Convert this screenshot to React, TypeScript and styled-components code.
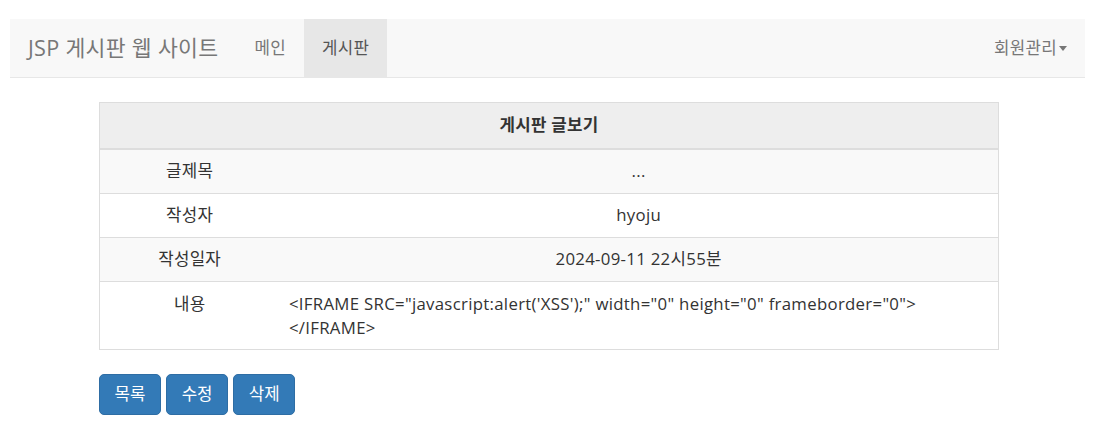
import styled, { createGlobalStyle } from "styled-components";

const GlobalStyle = createGlobalStyle`
  html, body {
    margin: 0;
    padding: 0;
    background: #ffffff;
  }
  body {
    font-family: "Open Sans", "Noto Sans CJK KR", sans-serif;
    font-size: 16.8px;
    line-height: 24px;
    letter-spacing: 0.3px;
    color: #333333;
  }
  * {
    box-sizing: border-box;
  }
`;

const Page = styled.div`
  width: 1104px;
  padding-top: 19px;
`;

const Navbar = styled.nav`
  display: flex;
  align-items: stretch;
  height: 59px;
  margin: 0 19px 24px 10px;
  background-color: #f8f8f8;
  border-bottom: 1px solid #e7e7e7;
`;

const Brand = styled.a`
  display: flex;
  align-items: center;
  padding: 0 18px;
  font-size: 21.6px;
  color: #777777;
  text-decoration: none;
`;

const Nav = styled.ul`
  display: flex;
  margin: 0;
  padding: 0;
  list-style: none;
`;

const NavRight = styled(Nav)`
  margin-left: auto;
`;

const NavItem = styled.li<{ $active?: boolean }>`
  display: flex;
  align-items: center;
  padding: 0 18px;
  color: ${(p) => (p.$active ? "#555555" : "#777777")};
  background-color: ${(p) => (p.$active ? "#e7e7e7" : "transparent")};
`;

const Caret = styled.span`
  display: inline-block;
  width: 0;
  height: 0;
  margin-left: 2px;
  border-top: 5px solid #777777;
  border-left: 4.5px solid transparent;
  border-right: 4.5px solid transparent;
  vertical-align: middle;
`;

const Container = styled.div`
  width: 900px;
  margin-left: 99px;
`;

const Table = styled.table`
  width: 100%;
  border-collapse: collapse;
  border-spacing: 0;
  border: 1px solid #dddddd;
  text-align: center;
  margin-bottom: 24px;
`;

const HeadCell = styled.th`
  height: 46px;
  padding: 9.6px;
  background-color: #eeeeee;
  border-bottom: 2px solid #dddddd;
  font-weight: bold;
  text-align: center;
`;

const Row = styled.tr<{ $striped?: boolean }>`
  background-color: ${(p) => (p.$striped ? "#f9f9f9" : "#ffffff")};
`;

const LabelCell = styled.td`
  width: 20%;
  padding: 9.6px;
  border-top: 1px solid #dddddd;
  vertical-align: top;
`;

const ValueCell = styled.td<{ $left?: boolean }>`
  padding: 9.6px;
  border-top: 1px solid #dddddd;
  vertical-align: top;
  text-align: ${(p) => (p.$left ? "left" : "center")};
`;

const Buttons = styled.div`
  display: flex;
  gap: 5px;
`;

const Button = styled.a`
  display: inline-block;
  height: 41px;
  padding: 7px 14.6px;
  font-size: 16.8px;
  line-height: 24px;
  letter-spacing: 0;
  color: #ffffff;
  background-color: #337ab7;
  border: 1px solid #2e6da4;
  border-radius: 5px;
  text-decoration: none;
`;

const rows = [
  { label: "글제목", value: "..." },
  { label: "작성자", value: "hyoju" },
  { label: "작성일자", value: "2024-09-11 22시55분" },
];

export default function App() {
  return (
    <Page>
      <GlobalStyle />
      <Navbar>
        <Brand>JSP 게시판 웹 사이트</Brand>
        <Nav>
          <NavItem>메인</NavItem>
          <NavItem $active>게시판</NavItem>
        </Nav>
        <NavRight>
          <NavItem>
            회원관리
            <Caret />
          </NavItem>
        </NavRight>
      </Navbar>
      <Container>
        <Table>
          <thead>
            <tr>
              <HeadCell colSpan={2}>게시판 글보기</HeadCell>
            </tr>
          </thead>
          <tbody>
            {rows.map((r, i) => (
              <Row key={r.label} $striped={i % 2 === 0}>
                <LabelCell>{r.label}</LabelCell>
                <ValueCell>{r.value}</ValueCell>
              </Row>
            ))}
            <Row>
              <LabelCell>내용</LabelCell>
              <ValueCell $left>
                &lt;IFRAME SRC="javascript:alert('XSS');" width="0" height="0" frameborder="0"&gt;
                <br />
                &lt;/IFRAME&gt;
              </ValueCell>
            </Row>
          </tbody>
        </Table>
        <Buttons>
          <Button>목록</Button>
          <Button>수정</Button>
          <Button>삭제</Button>
        </Buttons>
      </Container>
    </Page>
  );
}
